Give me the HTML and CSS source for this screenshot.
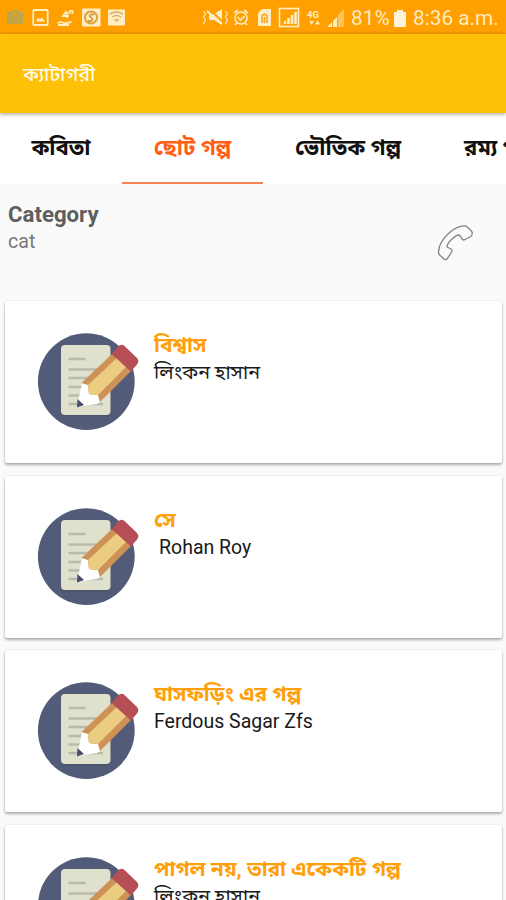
FILE: index.html
```html
<!DOCTYPE html>
<html lang="bn">
<head>
<meta charset="utf-8">
<title>ক্যাটাগরী</title>
<link rel="stylesheet" href="styles.css">
</head>
<body>
<svg class="defs" aria-hidden="true">
  <symbol id="note" viewBox="36 330 104 104">
    <circle cx="86.3" cy="381.6" r="48.4" fill="#525c78"/>
    <rect x="61" y="346.500" width="50" height="70" rx="4" fill="#46505f" opacity=".6"/>
    <rect x="61" y="345" width="49.5" height="70" rx="4" fill="#dfe1cd"/>
    <path d="M68.5 359H85.500M68.500 369.500H103M68.500 378H103M68.500 387H103M68.500 395.500H103M68.500 404H103" stroke="#b9baae" stroke-width="2.400"/>
    <path d="M77 407L82 383L88 385L89 394L98 395L100 402L97 404Z" fill="#fff"/>
    <path d="M77.500 399L84 405L77 407.500Z" fill="#454e6d"/>
    <path d="M81.500 383L112 354L131 371L100 402L98 395L89 394L88 385Z" fill="#cf9256"/>
    <path d="M88 385L117 358L126 367L98 395L89 394Z" fill="#ebcd82"/>
    <path d="M111.500 354L118 346.500Q121 343.500 124.500 346L136.500 357.500Q140 361 137 364.500L131 371.500Z" fill="#b54e55"/>
  </symbol>
</svg>
<header class="status">
  <svg class="st-left" viewBox="0 0 130 34" fill="none" stroke="#ffedc4" stroke-width="1.800">
    <path d="M7 12h4l2-2h5l2 2h3v12H7z" fill="#b9a64e" stroke="none"/><circle cx="15.300" cy="17.500" r="3.500" stroke="#dda02d"/>
    <rect x="33.200" y="10" width="14.500" height="15" rx="1"/><path d="M36 21.500l2-4 2 2 2-2 3 4z" fill="#ffedc4" stroke="none"/>
    <path d="M57.500 23q4-2 7 0.500l7-1.500M58 25h11M66.500 11l-3.500 5h6m-2-4v6M69.500 14v-2q0-2 3-1v3"/>
    <rect x="82" y="8.500" width="18.500" height="18" rx="1" fill="#ffedc4" stroke="none"/><circle cx="91" cy="17.500" r="6" stroke="#dfa039" stroke-width="2"/><path d="M94 14.500h-3q-3 1 0 3 3 2 0 3.500h-3" stroke="#d99d3c"/>
    <rect x="108" y="9.500" width="17" height="16" rx="1" fill="#ffedc4" stroke="none"/><path d="M110 14q6.500-4 13 0M112 17q4.500-3 9 0M114.500 19l2 2 2-2" stroke="#dcae62" stroke-width="1.500"/>
  </svg>
  <svg class="st-right" viewBox="200 0 146 34" fill="none" stroke="#ffedc4" stroke-width="1.600">
    <path d="M209 14h5l8-5v16l-8-5h-5z" fill="#ffedc4" stroke="none"/><path d="M209 9l16 15" stroke="#ff9f00" stroke-width="2"/><path d="M207 11l15 13" stroke-width="2"/><path d="M203.500 11l2 3-2 3 2 3-2 4M225.500 11l2 3-2 3 2 3-2 4" stroke-width="1.200"/>
    <circle cx="241" cy="18" r="6"/><path d="M234 13l4-3M244 10l4 3M237.500 17l3 3 4-4M237 23l-2 2M245 23l2 2"/>
    <path d="M258 13l4-4h9v17h-13z" fill="#ffedc4" stroke="none"/><path d="M262 23v-7l2.500-2 2.500 2v7M264.500 17v6" stroke="#f7a421"/>
    <rect x="279.500" y="8.500" width="19" height="18"/><path d="M285 24v-3M288.500 24v-6M292 24v-9M295.500 24v-12" stroke-width="2.600"/>
    <path d="M309 21h5l-2.500 4zM315 24.500h5l-2.500-4z" fill="#ffedc4" stroke="none"/>
    <path d="M327 27l5-5v5zM333 27v-6l4-4v10z" fill="#ffedc4" stroke="none"/><path d="M338 27V15l6-6v18z" fill="#ffc35b" stroke="none"/>
    <text x="307" y="17.500" class="net">4G</text>
  </svg>
  <span class="pct">81%</span>
  <svg class="battery" viewBox="0 0 12 17"><path d="M0 2h3V0h6v2h3v15H0z" fill="#fff2db"/></svg>
  <span class="clock">8:36 a.m.</span>
</header>
<div class="appbar"><h1>ক্যাটাগরী</h1></div>
<nav class="tabs">
  <a class="tab tab-poem">কবিতা</a>
  <a class="tab tab-short active">ছোট গল্প</a>
  <a class="tab tab-ghost">ভৌতিক গল্প</a>
  <a class="tab tab-fun">রম্য গল্প</a>
</nav>
<section class="category">
  <div>
    <h2>Category</h2>
    <p>cat</p>
  </div>
  <svg class="phone" viewBox="436 222 40 42"><path d="M439.500 252Q440 242 450 233Q459 225 467 226Q470 228 473 232Q474 235 471 237L465 240Q463 240 462 237L460 235Q457 235 452 240Q448 244 448 247L452 249Q454 250 452 253L448 259Q446 261 443 257Q439 254 439.500 252Z" fill="none" stroke="#838383" stroke-width="1.300" stroke-linejoin="round"/></svg>
</section>
<main class="list">
  <article class="card"><svg class="note"><use href="#note"/></svg><div class="info"><h3>বিশ্বাস</h3><p>লিংকন হাসান</p></div></article>
  <article class="card"><svg class="note"><use href="#note"/></svg><div class="info"><h3>সে</h3><p class="latin indent">Rohan Roy</p></div></article>
  <article class="card"><svg class="note"><use href="#note"/></svg><div class="info"><h3>ঘাসফড়িং এর গল্প</h3><p class="latin">Ferdous Sagar Zfs</p></div></article>
  <article class="card"><svg class="note"><use href="#note"/></svg><div class="info"><h3>পাগল নয়, তারা একেকটি গল্প</h3><p>লিংকন হাসান</p></div></article>
</main>
</body>
</html>
```
FILE: styles.css
```css
* { box-sizing: border-box; }
html, body { height: 900px; overflow: hidden; }
body { margin: 0; width: 506px; background: #fafafa; color: #111; font-family: Roboto, "Noto Sans Bengali", "Noto Sans", sans-serif; display: flex; flex-direction: column; }
h1, h2, h3, p { margin: 0; }
.defs { display: none; }
.status { flex: none; height: 34px; display: flex; align-items: center; background: #ff9f00; color: #ffebbf; white-space: nowrap; }
.st-left { width: 130px; height: 34px; flex: none; }
.st-right { width: 146px; height: 34px; margin-left: 70px; flex: none; }
.net { font: 700 9.5px Roboto, sans-serif; fill: #ffedc4; stroke: none; }
.pct, .clock { font-size: 20.8px; line-height: 34px; padding-top: 2px; }
.pct { width: 43px; margin-left: 5px; }
.battery { width: 12px; height: 17px; margin: 2px 7px 0 0; flex: none; }
.appbar { flex: none; height: 79px; padding: 25px 23px 0; background: #ffc107; box-shadow: 0 1px 4px rgba(0,0,0,.4); position: relative; z-index: 1; }
.appbar h1 { font-size: 19.5px; line-height: 32px; font-weight: 500; color: #fffbe9; }
.tabs { flex: none; height: 71px; display: flex; background: #fff; overflow: hidden; }
.tab { flex: none; font-size: 22px; line-height: 32px; font-weight: 700; padding-top: 19px; text-align: center; white-space: nowrap; }
.tab-poem { width: 122px; }
.tab-short { width: 141px; }
.tab-ghost { width: 170px; }
.tab-fun { padding-left: 31px; }
.active { color: #ff5f15; border-bottom: 2px solid #f88358; }
.category { flex: none; height: 116px; padding: 16px 31px 0 8px; display: flex; justify-content: space-between; color: #666; }
.category h2 { font-size: 22.2px; line-height: 28px; font-weight: 700; color: #5e5e5e; }
.category p { font-size: 19.6px; line-height: 28px; color: #777; }
.phone { width: 40px; height: 42px; margin-top: 22px; }
.list { display: flex; flex-direction: column; gap: 12.5px; height: 600px; overflow: hidden; padding: 1px 4px 0 5px; }
.card { flex: none; height: 162px; display: flex; background: #fff; border-radius: 2px; box-shadow: 0 2px 3px rgba(0,0,0,.3), 0 0 2px rgba(0,0,0,.12); }
.note { width: 104px; height: 104px; margin: 29px 0 0 31px; flex: none; }
.info { padding: 31px 0 0 14px; }
.info h3 { font-size: 20.9px; line-height: 27px; font-weight: 700; color: #ff9f0c; }
.info p { font-size: 19.7px; line-height: 27px; color: #1a1a1a; white-space: nowrap; }
.info .latin { font-size: 19.5px; }
.info .indent { padding-left: 5px; }
```
